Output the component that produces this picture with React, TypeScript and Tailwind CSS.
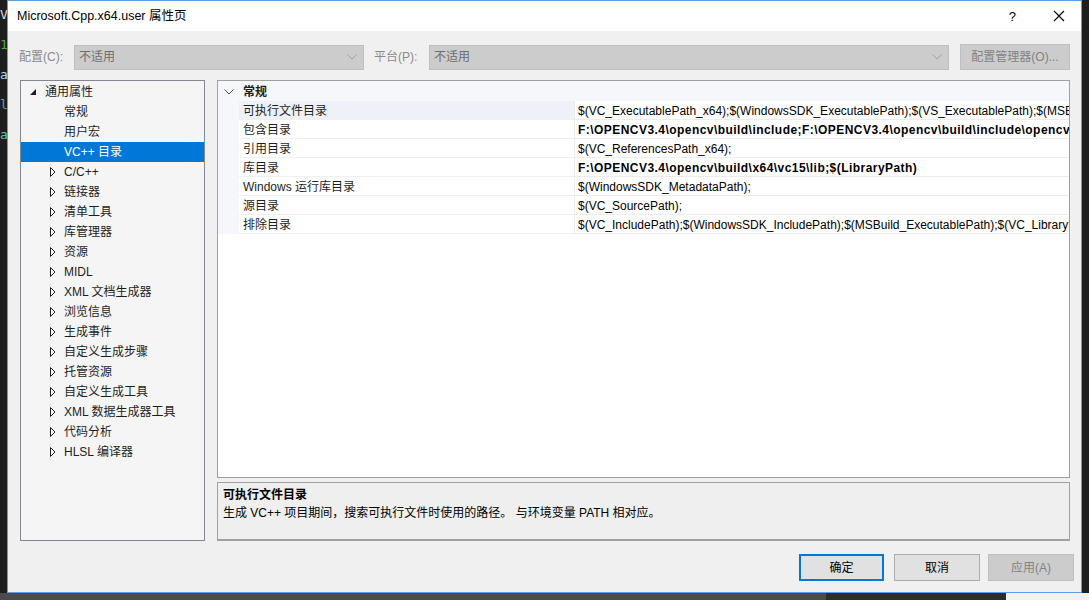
import React from 'react';

const FONT = "font-['Liberation_Sans','Noto_Sans_CJK_SC',sans-serif]";

interface TreeItem {
  label: string;
  level: 0 | 1;
  kind: 'open' | 'closed' | 'leaf';
  selected?: boolean;
}

const treeItems: TreeItem[] = [
  { label: '通用属性', level: 0, kind: 'open' },
  { label: '常规', level: 1, kind: 'leaf' },
  { label: '用户宏', level: 1, kind: 'leaf' },
  { label: 'VC++ 目录', level: 1, kind: 'leaf', selected: true },
  { label: 'C/C++', level: 1, kind: 'closed' },
  { label: '链接器', level: 1, kind: 'closed' },
  { label: '清单工具', level: 1, kind: 'closed' },
  { label: '库管理器', level: 1, kind: 'closed' },
  { label: '资源', level: 1, kind: 'closed' },
  { label: 'MIDL', level: 1, kind: 'closed' },
  { label: 'XML 文档生成器', level: 1, kind: 'closed' },
  { label: '浏览信息', level: 1, kind: 'closed' },
  { label: '生成事件', level: 1, kind: 'closed' },
  { label: '自定义生成步骤', level: 1, kind: 'closed' },
  { label: '托管资源', level: 1, kind: 'closed' },
  { label: '自定义生成工具', level: 1, kind: 'closed' },
  { label: 'XML 数据生成器工具', level: 1, kind: 'closed' },
  { label: '代码分析', level: 1, kind: 'closed' },
  { label: 'HLSL 编译器', level: 1, kind: 'closed' }
];

const rows = [
  {
    name: '可执行文件目录',
    value: '$(VC_ExecutablePath_x64);$(WindowsSDK_ExecutablePath);$(VS_ExecutablePath);$(MSBuild_ExecutablePath);$(FxCopDir);$(PATH);',
    bold: false,
    selected: true
  },
  {
    name: '包含目录',
    value: 'F:\\OPENCV3.4\\opencv\\build\\include;F:\\OPENCV3.4\\opencv\\build\\include\\opencv;F:\\OPENCV3.4\\opencv\\build\\include\\opencv2;$(IncludePath)',
    bold: true
  },
  { name: '引用目录', value: '$(VC_ReferencesPath_x64);', bold: false },
  { name: '库目录', value: 'F:\\OPENCV3.4\\opencv\\build\\x64\\vc15\\lib;$(LibraryPath)', bold: true },
  { name: 'Windows 运行库目录', value: '$(WindowsSDK_MetadataPath);', bold: false },
  { name: '源目录', value: '$(VC_SourcePath);', bold: false },
  {
    name: '排除目录',
    value: '$(VC_IncludePath);$(WindowsSDK_IncludePath);$(MSBuild_ExecutablePath);$(VC_LibraryPath_x64);',
    bold: false
  }
];

function Chevron({ color = '#a0a0a0' }: { color?: string }) {
  return (
    <svg width="10" height="6" viewBox="0 0 10 6">
      <polyline points="0.5,0.5 5,5 9.5,0.5" fill="none" stroke={color} strokeWidth="1" />
    </svg>
  );
}

function Dropdown({ width }: { width: string }) {
  return (
    <div className={`${width} flex h-[25px] items-center justify-between border border-[#bfbfbf] bg-[#cccccc] pl-[4px] pr-[6px]`}>
      <span className="text-[#6d6d6d]">不适用</span>
      <Chevron />
    </div>
  );
}

function TreeRow({ item }: { item: TreeItem }) {
  return (
    <div
      className={`flex h-[20px] items-center ${item.selected ? 'bg-[#0078d7] text-white' : 'text-[#1e1e1e]'}`}
    >
      {item.level === 0 ? (
        <div className="flex w-[24px] justify-end pr-[9px]">
          <svg width="6" height="6" viewBox="0 0 6 6">
            <polygon points="6,0 6,6 0,6" fill="#1e1e1e" />
          </svg>
        </div>
      ) : (
        <div className="flex w-[43px] items-center pl-[29px]">
          {item.kind === 'closed' && (
            <svg width="6" height="10" viewBox="0 0 6 10">
              <polygon points="0.5,0.5 5,5 0.5,9.5" fill="none" stroke="#1e1e1e" strokeWidth="1" />
            </svg>
          )}
        </div>
      )}
      <span className="whitespace-nowrap">{item.label}</span>
    </div>
  );
}

export default function App() {
  return (
    <div className={`${FONT} flex h-[600px] w-[1089px] flex-col overflow-hidden bg-[#1e1e1e] text-[12px] leading-none`}>
      <div className="flex h-[593px]">
        {/* editor behind the dialog, left edge */}
        <div className="flex w-[7px] flex-col gap-[17px] overflow-hidden bg-[#1e1e1e] pt-[8px] font-['DejaVu_Sans_Mono',monospace] text-[13px]">
          <span className="text-[#dcdcdc]">V</span>
          <span className="text-[#57a64a]">1</span>
          <span className="text-[#9cdcfe]">a</span>
          <span className="text-[#569cd6]">l</span>
          <span className="text-[#4ec9b0]">a</span>
        </div>

        {/* dialog */}
        <div className="flex w-[1075px] flex-col border border-[#5b9ee6] bg-[#f0f0f0]">
          <div className="flex h-[30px] shrink-0 items-center bg-white pl-[9px] text-[12.5px] text-black">
            <span>Microsoft.Cpp.x64.user 属性页</span>
            <span className="ml-auto mr-[37px] text-[13px]">?</span>
            <svg width="12" height="12" viewBox="0 0 12 12" className="mr-[16px]">
              <path d="M1 1 L11 11 M11 1 L1 11" stroke="#000" strokeWidth="1.1" />
            </svg>
          </div>

          <div className="mt-[13px] flex h-[26px] items-center pl-[11px]">
            <span className="w-[55px] text-[#8a8a8a]">配置(C):</span>
            <Dropdown width="w-[290px]" />
            <span className="ml-[10px] w-[55px] text-[#8a8a8a]">平台(P):</span>
            <Dropdown width="w-[520px]" />
            <div className="ml-[11px] flex h-[26px] w-[110px] items-center justify-center border border-[#bfbfbf] bg-[#cccccc] text-[#838383]">
              配置管理器(O)...
            </div>
          </div>

          <div className="mt-[10px] flex pl-[12px]">
            {/* category tree */}
            <div className="h-[461px] w-[185px] border border-[#828790] bg-[#f5f5f5] pt-[1px]">
              {treeItems.map((item) => (
                <TreeRow key={item.label} item={item} />
              ))}
            </div>

            <div className="ml-[12px] flex w-[853px] flex-col gap-[4px]">
              {/* property grid */}
              <div className="h-[398px] overflow-hidden border border-[#a0a0a0] bg-white">
                <div className="flex h-[20px] items-center bg-[#f5f7fa] pt-[2px]">
                  <div className="flex w-[21px] justify-center pl-[1px]">
                    <Chevron color="#555555" />
                  </div>
                  <span className="pl-[4px] font-bold text-[#1e1e1e]">常规</span>
                </div>
                {rows.map((row) => (
                  <div key={row.name} className="flex h-[19px]">
                    <div className="w-[21px] shrink-0 bg-[#f5f7fa]" />
                    <div
                      className={`flex w-[335px] shrink-0 items-center border-b border-[#f0f0f0] pl-[4px] pt-[2px] text-[#1e1e1e] ${row.selected ? 'bg-[#eef2f8]' : 'bg-white'}`}
                    >
                      {row.name}
                    </div>
                    <div
                      className={`flex min-w-0 flex-1 items-center overflow-hidden whitespace-nowrap border-b border-l border-[#ececec] pl-[3px] pr-[5px] pt-[2px] text-black ${row.bold ? 'font-bold tracking-[0.45px]' : ''}`}
                    >
                      {row.value}
                    </div>
                  </div>
                ))}
              </div>

              {/* description */}
              <div className="flex h-[59px] flex-col border border-b-2 border-[#a0a0a0] bg-[#efefef] pl-[5px] pt-[5px] text-black">
                <span className="font-bold leading-[14px]">可执行文件目录</span>
                <span className="mt-[4px] leading-[14px]">生成 VC++ 项目期间，搜索可执行文件时使用的路径。 与环境变量 PATH 相对应。</span>
              </div>
            </div>
          </div>

          <div className="mt-[13px] flex h-[27px] pl-[791px]">
            <div className="flex w-[85px] items-center justify-center border-2 border-[#0078d7] bg-[#e1e1e1] text-black">
              确定
            </div>
            <div className="ml-[10px] flex w-[86px] items-center justify-center border border-[#adadad] bg-[#e1e1e1] text-black">
              取消
            </div>
            <div className="ml-[8px] flex w-[86px] items-center justify-center border border-[#bfbfbf] bg-[#cccccc] text-[#838383]">
              应用(A)
            </div>
          </div>
        </div>

        <div className="flex-1 bg-[#1e1e1e]" />
      </div>

      <div className="flex h-[7px]">
        <div className="w-[826px] bg-[#4a4a4f]" />
        <div className="w-[180px] bg-[#2d2d30]" />
        <div className="flex-1 bg-[#f2f2f2]" />
      </div>
    </div>
  );
}
